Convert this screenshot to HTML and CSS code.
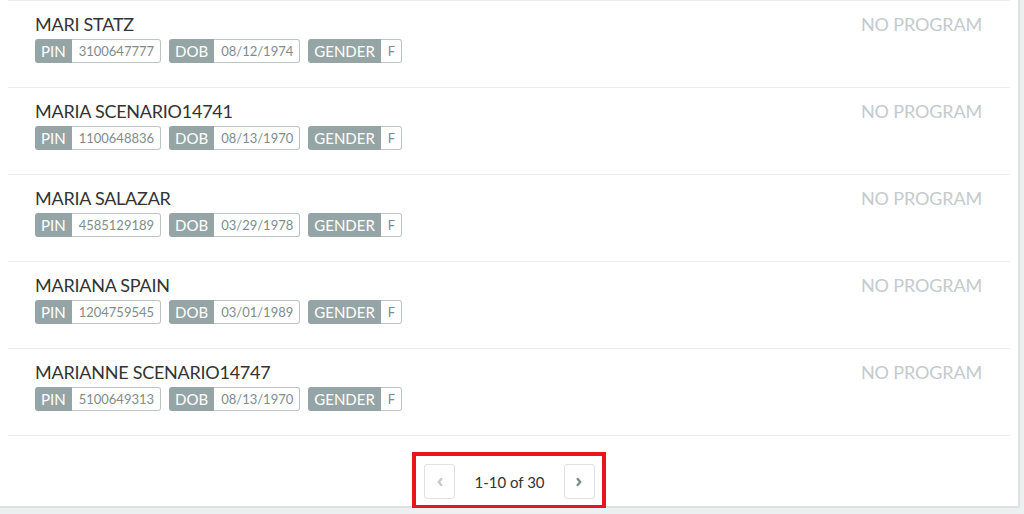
FILE: index.html
```html
<!DOCTYPE html>
<html lang="en">
<head>
    <meta charset="UTF-8">
    <meta name="viewport" content="width=device-width, initial-scale=1.0">
    <title>Participants</title>
    <link rel="stylesheet" href="styles.css">
</head>
<body>
    <div class="card">
        <ul class="people" id="people">
            <!-- rows are filled in by the script below -->
        </ul>
        <div class="pager-wrap">
            <div class="pager">
                <button class="page-btn" disabled aria-label="Previous">
                    <svg width="8" height="10" viewBox="0 0 8 10"><path d="M5.3 2 2.7 5 5.3 8" fill="none" stroke="currentColor" stroke-width="2.4" stroke-linecap="round" stroke-linejoin="round"/></svg>
                </button>
                <span class="page-info">1-10 of 30</span>
                <button class="page-btn" aria-label="Next">
                    <svg width="8" height="10" viewBox="0 0 8 10"><path d="M2.7 2 5.3 5 2.7 8" fill="none" stroke="currentColor" stroke-width="2.4" stroke-linecap="round" stroke-linejoin="round"/></svg>
                </button>
            </div>
        </div>
    </div>
    <script>
        const people = [
            { name: 'MARI STATZ', pin: '3100647777', dob: '08/12/1974', gender: 'F' },
            { name: 'MARIA SCENARIO14741', pin: '1100648836', dob: '08/13/1970', gender: 'F' },
            { name: 'MARIA SALAZAR', pin: '4585129189', dob: '03/29/1978', gender: 'F' },
            { name: 'MARIANA SPAIN', pin: '1204759545', dob: '03/01/1989', gender: 'F' },
            { name: 'MARIANNE SCENARIO14747', pin: '5100649313', dob: '08/13/1970', gender: 'F' }
        ];

        function tag(label, value) {
            return `<span class="tag"><span class="tag-label">${label}</span><span class="tag-value">${value}</span></span>`;
        }

        const list = document.getElementById('people');
        people.forEach(p => {
            const li = document.createElement('li');
            li.className = 'person';
            li.innerHTML = `
                <div class="person-main">
                    <div class="person-name">${p.name}</div>
                    <div class="tags">${tag('PIN', p.pin)}${tag('DOB', p.dob)}${tag('GENDER', p.gender)}</div>
                </div>
                <div class="program">NO PROGRAM</div>
            `;
            list.appendChild(li);
        });
    </script>
</body>
</html>
```

FILE: styles.css
```css
body {
    margin: 0;
    background-color: #edf0f0;
    font-family: Lato, "Open Sans", sans-serif;
    color: #333;
}

.card {
    width: 1018px;
    height: 506px;
    background-color: #fff;
    border-right: 2px solid #dde1e1;
    border-bottom: 2px solid #dde1e1;
}

.people {
    list-style: none;
    margin: 0 8px;
    padding: 0;
}

.person {
    display: flex;
    justify-content: space-between;
    height: 87px;
    padding: 12px 28px 0 27px;
    box-sizing: border-box;
    border-top: 1px solid #eceeee;
}

.person:last-child {
    border-bottom: 1px solid #eceeee;
    height: 88px;
}

.person-name {
    font-size: 18px;
    line-height: 22px;
    letter-spacing: -0.25px;
    color: #333;
}

.tags {
    display: flex;
    gap: 8px;
    margin-top: 4px;
}

.tag {
    display: flex;
    height: 24px;
}

.tag-label {
    background-color: #95a5a6;
    color: #fff;
    font-size: 15px;
    line-height: 24px;
    padding: 0 6px;
    border-radius: 3px 0 0 3px;
}

.tag-value {
    border: 1px solid #bcc4c4;
    border-left: none;
    border-radius: 0 3px 3px 0;
    color: #7f8c8d;
    font-size: 13px;
    line-height: 22px;
    padding: 0 6px 0 7px;
}

.program {
    font-size: 18px;
    line-height: 22px;
    letter-spacing: -0.15px;
    color: #c5cacd;
}

.pager-wrap {
    display: flex;
    justify-content: center;
    padding-top: 16px;
}

.pager {
    display: flex;
    align-items: center;
    gap: 19px;
    padding: 8px 7px 6px 8px;
    border: 4px solid #e8151f;
}

.page-btn {
    box-sizing: border-box;
    width: 31px;
    height: 35px;
    padding: 0;
    display: flex;
    align-items: center;
    justify-content: center;
    background-color: #fff;
    border: 1px solid #dfe3e3;
    border-radius: 3px;
    color: #7f8c8d;
    cursor: pointer;
}

.page-btn:disabled {
    color: #c3cbcb;
    cursor: default;
}

.page-info {
    font-size: 15px;
    color: #333;
}
```
